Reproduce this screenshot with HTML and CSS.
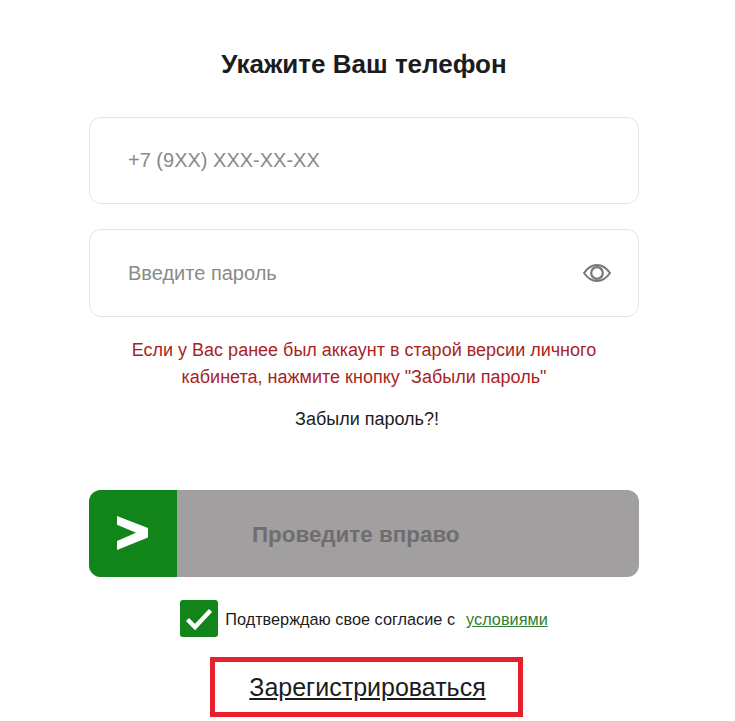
FILE: index.html
```
<!DOCTYPE html>
<html lang="ru">
<head>
<meta charset="utf-8">
<title>Вход</title>
<link rel="stylesheet" href="styles.css">
</head>
<body>
<main class="form">
  <h1 class="title">Укажите Ваш телефон</h1>
  <div class="field"><span class="placeholder phone">+7 (9XX) XXX-XX-XX</span></div>
  <div class="field second">
    <span class="placeholder">Введите пароль</span>
    <svg class="eye" width="28" height="20" viewBox="0 0 28 20" fill="none" stroke="#777">
      <path d="M1 10C4.500 5 8.800 2 14 2S23.500 5 27 10C23.500 15 19.200 18 14 18S4.500 15 1 10Z" stroke-width="2"/>
      <circle cx="14" cy="10" r="5.800" stroke-width="2.200"/>
    </svg>
  </div>
  <p class="warning">Если у Вас ранее был аккаунт в старой версии личного<br>кабинета, нажмите кнопку "Забыли пароль"</p>
  <p class="forgot">Забыли пароль?!</p>
  <div class="slider">
    <div class="handle">
      <svg class="arrow" width="31" height="34" viewBox="0 0 31 34"><path d="M0 0 31 12V21.500L0 34V25L19 16.700 0 8.700Z" fill="#fff"/></svg>
    </div>
    <span class="slider-text">Проведите вправо</span>
  </div>
  <div class="consent">
    <span class="check">
      <svg width="30" height="26" viewBox="0 0 30 26" fill="none"><path d="M3.500 13.500 11 21 26.500 4.500" stroke="#fff" stroke-width="4.400"/></svg>
    </span>
    <span class="consent-text">Подтверждаю свое согласие с</span>
    <a class="terms" href="#">условиями</a>
  </div>
  <div class="register-box"><a class="register" href="#">Зарегистрироваться</a></div>
</main>
</body>
</html>
```
FILE: styles.css
```
html, body {
  margin: 0;
  padding: 0;
  background: #fff;
}
body {
  height: 721px;
  overflow: hidden;
  font-family: "Liberation Sans", Arial, sans-serif;
  color: #1c1c1c;
}
.form {
  width: 550px;
  margin-left: 89px;
  display: flex;
  flex-direction: column;
  align-items: center;
}
.title {
  margin: 49px 0 0;
  height: 30px;
  font-size: 26px;
  line-height: 30px;
  font-weight: 700;
  text-align: center;
}
.field {
  box-sizing: border-box;
  width: 550px;
  height: 87px;
  margin-top: 38px;
  padding: 0 27px 0 38px;
  border: 1px solid #e3e3e3;
  border-radius: 12px;
  display: flex;
  align-items: center;
  justify-content: space-between;
}
.field.second {
  height: 88px;
  margin-top: 25px;
}
.placeholder {
  font-size: 20px;
  color: #8a8a8a;
}
.eye {
  flex: none;
}
.warning {
  margin: 20px 0 0;
  font-size: 18px;
  line-height: 27px;
  color: #a81f1f;
  text-align: center;
}
.forgot {
  margin: 15px 0 0 6px;
  font-size: 18px;
  line-height: 27px;
  text-align: center;
}
.slider {
  width: 550px;
  height: 87px;
  margin-top: 57px;
  border-radius: 12px;
  background: #a19f9f;
  overflow: hidden;
  display: flex;
  align-items: center;
}
.handle {
  width: 88px;
  height: 87px;
  padding-right: 2px;
  box-sizing: border-box;
  background: #11851a;
  display: flex;
  align-items: center;
  justify-content: center;
}
.arrow {
  margin-bottom: 2px;
}
.slider-text {
  margin: 2px 0 0 75px;
  font-size: 22.4px;
  font-weight: 700;
  color: #6f6d6d;
}
.consent {
  margin: 23px 0 0;
  height: 37px;
  display: flex;
  align-items: center;
  font-size: 16.3px;
}
.check {
  width: 38px;
  height: 37px;
  border-radius: 3px;
  background: #11851a;
  display: flex;
  align-items: center;
  justify-content: center;
}
.consent-text {
  margin: 2px 0 0 7px;
}
.terms {
  margin: 2px 0 0 11px;
  color: #2e7d32;
}
.register-box {
  box-sizing: border-box;
  width: 313px;
  height: 60px;
  margin: 20px 0 0 5px;
  padding-left: 2px;
  border: 5px solid #e8202e;
  display: flex;
  align-items: center;
  justify-content: center;
}
.register {
  font-size: 25px;
  color: #1c1c1c;
}
```
